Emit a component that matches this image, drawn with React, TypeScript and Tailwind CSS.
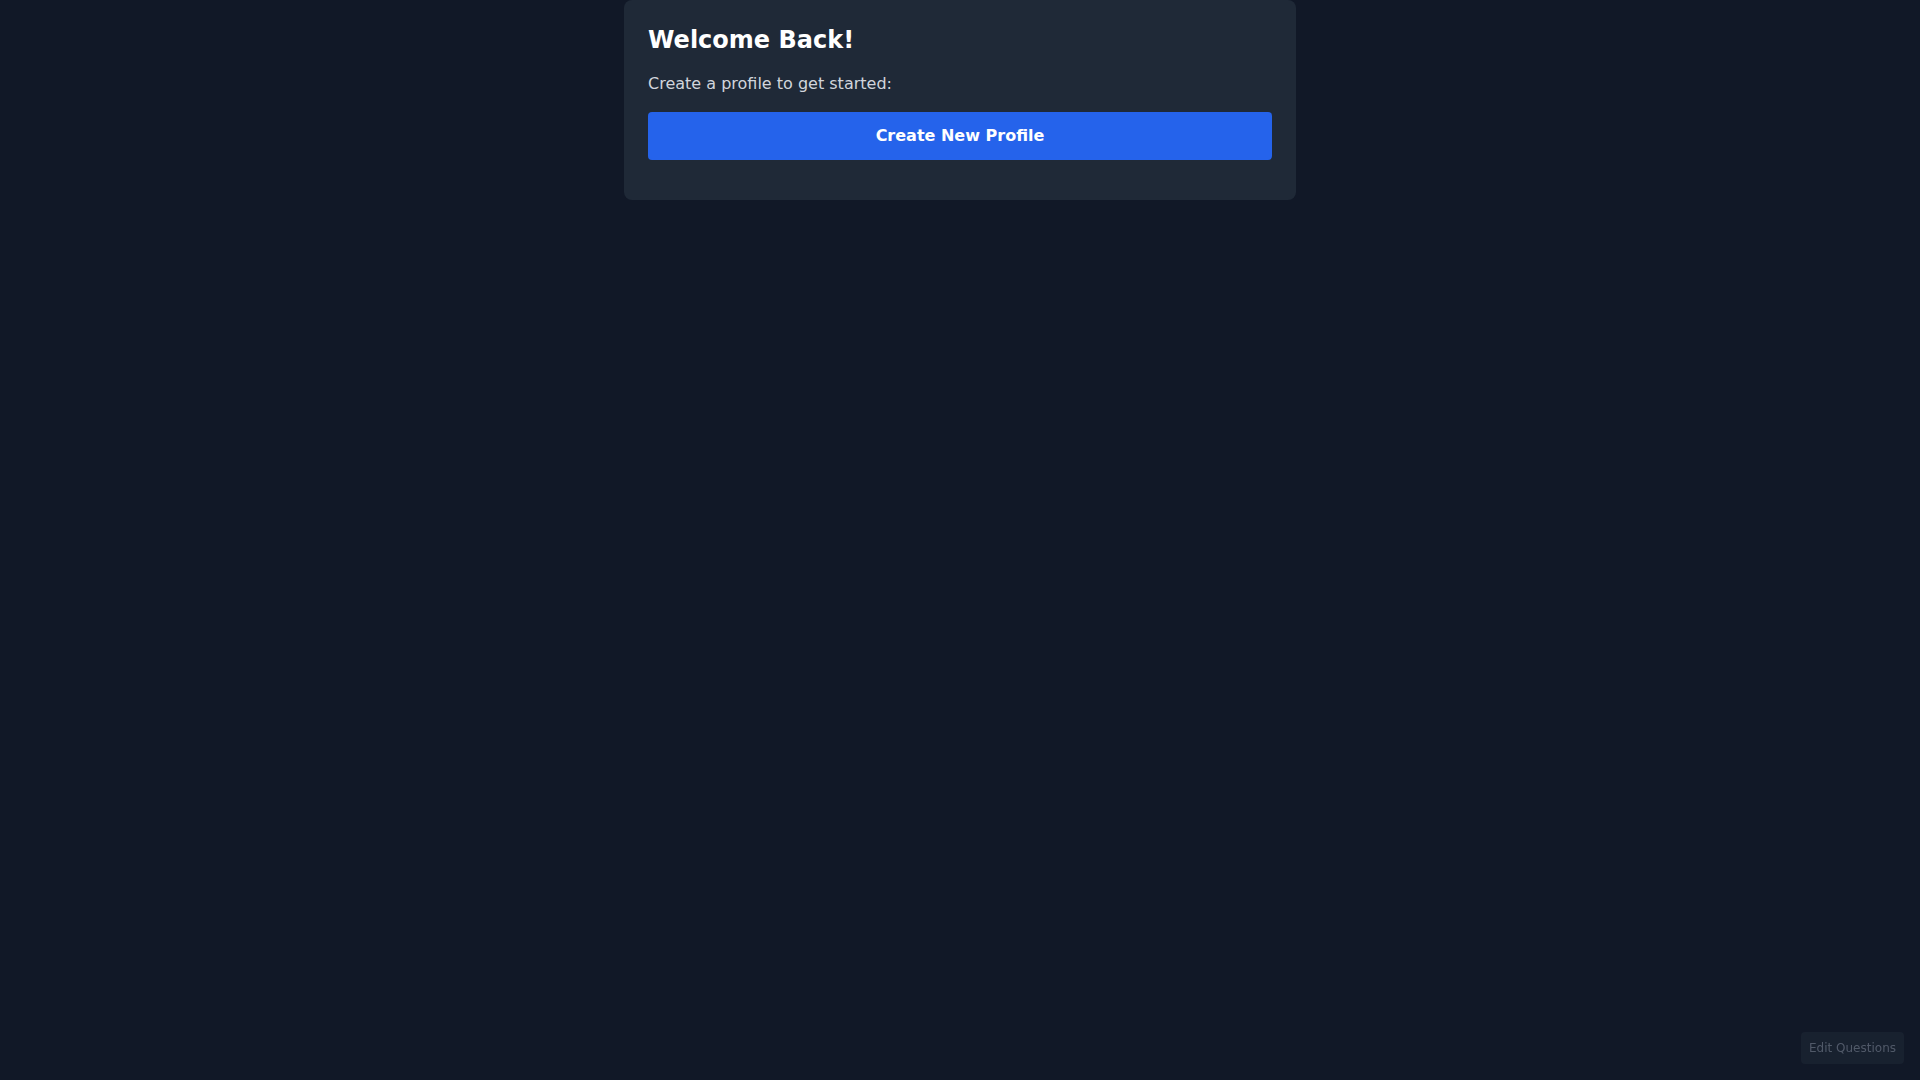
export default function App() {
  return (
    <div
      className="min-h-screen bg-[#111827] text-white"
      style={{ fontFamily: '"DejaVu Sans", sans-serif' }}
    >
      <div className="mx-auto max-w-2xl">
        <div className="rounded-lg bg-[#1f2937] p-6">
          <h1 className="mb-4 text-2xl font-bold">Welcome Back!</h1>
          <p className="mb-4 text-gray-300">Create a profile to get started:</p>
          <div className="mb-4">
            <button className="w-full rounded bg-[#2563eb] py-3 font-bold text-white">
              Create New Profile
            </button>
          </div>
        </div>
      </div>

      <button className="fixed bottom-4 right-4 rounded bg-[#1f2937]/50 px-2 py-2 text-xs text-gray-500/70">
        Edit Questions
      </button>
    </div>
  )
}
